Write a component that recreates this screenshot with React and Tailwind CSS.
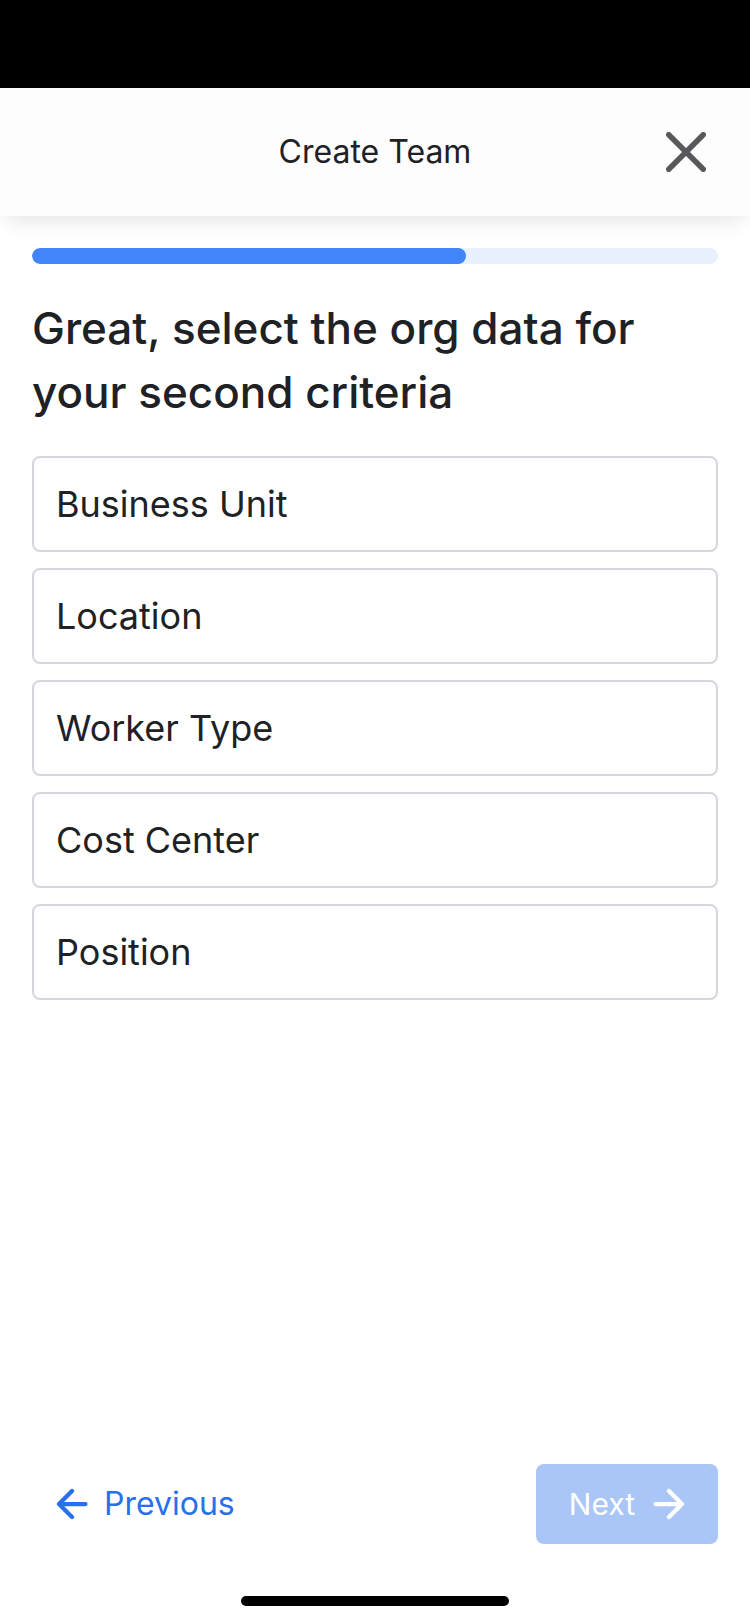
const criteria = ["Business Unit", "Location", "Worker Type", "Cost Center", "Position"];

function CloseIcon() {
  return (
    <svg className="size-10" viewBox="0 0 40 40" fill="none" stroke="currentColor" strokeWidth="5.5" strokeLinecap="round" aria-hidden="true">
      <path d="M2.75 2.75 37.25 37.25M37.25 2.75 2.75 37.25" />
    </svg>
  );
}

function ArrowIcon({ className }) {
  return (
    <svg className={className} viewBox="0 0 32 32" fill="none" stroke="currentColor" strokeWidth="4.25" strokeLinecap="round" strokeLinejoin="round" aria-hidden="true">
      <path d="M2.5 16H29M16 3 29 16 16 29" />
    </svg>
  );
}

export default function App() {
  return (
    <div className="flex min-h-screen flex-col bg-white font-[Inter,sans-serif] text-[#202124]">
      <div className="h-22 bg-black" />
      <header className="grid h-32 grid-cols-[1fr_auto_1fr] items-center bg-[#fdfdfd] px-11 shadow-[0_10px_20px_-6px_rgba(0,0,0,0.11)]">
        <h1 className="col-start-2 text-[32px] leading-10">Create Team</h1>
        <button type="button" aria-label="Close" className="justify-self-end text-[#58585b]">
          <CloseIcon />
        </button>
      </header>

      <main className="flex flex-1 flex-col px-8 pt-8">
        <div role="progressbar" aria-label="Progress" aria-valuenow={63} aria-valuemin={0} aria-valuemax={100} className="h-4 overflow-hidden rounded-full bg-[#e9f0fe]">
          <div className="h-full w-[63.3%] rounded-full bg-[#4285fb]" />
        </div>
        <h2 className="mt-8 max-w-[640px] text-[44px] leading-16 font-medium">
          Great, select the org data for your second criteria
        </h2>
        <div className="mt-8 flex flex-col gap-4">
          {criteria.map((name) => (
            <button key={name} type="button" className="flex h-24 items-center rounded-lg border-2 border-[#d6d6dc] bg-white px-[22px] text-left text-[36px] leading-12">
              {name}
            </button>
          ))}
        </div>
      </main>

      <footer className="px-8">
        <div className="flex items-center justify-between">
          <button type="button" className="flex h-20 items-center gap-4 px-6 text-[32px] text-[#2970eb]">
            <ArrowIcon className="size-8 rotate-180" />
            Previous
          </button>
          <button type="button" disabled className="flex h-20 items-center gap-[18px] rounded-lg bg-[#aac6f7] px-[33px] text-[30px] text-white">
            Next
            <ArrowIcon className="size-8" />
          </button>
        </div>
        <div className="mx-auto mt-13 mb-[18px] h-2.5 w-[268px] rounded-full bg-black" />
      </footer>
    </div>
  );
}
